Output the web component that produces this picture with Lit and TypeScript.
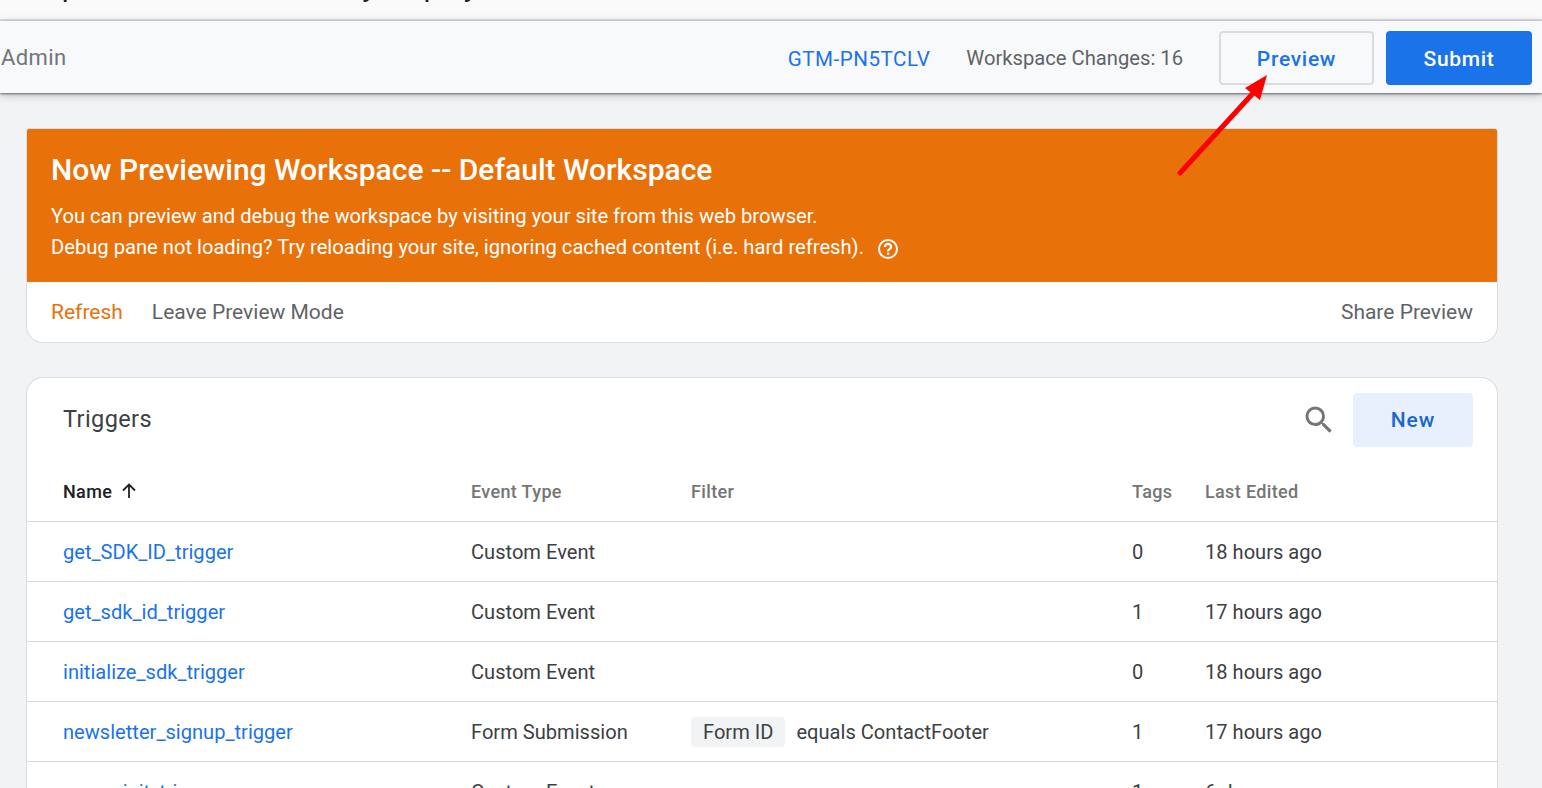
import { LitElement, html, css, svg } from 'lit';
import { customElement } from 'lit/decorators.js';

type Trigger = {
  name: string;
  type: string;
  filter?: { key: string; rule: string };
  tags: string;
  edited: string;
};

const TRIGGERS: Trigger[] = [
  { name: 'get_SDK_ID_trigger', type: 'Custom Event', tags: '0', edited: '18 hours ago' },
  { name: 'get_sdk_id_trigger', type: 'Custom Event', tags: '1', edited: '17 hours ago' },
  { name: 'initialize_sdk_trigger', type: 'Custom Event', tags: '0', edited: '18 hours ago' },
  {
    name: 'newsletter_signup_trigger',
    type: 'Form Submission',
    filter: { key: 'Form ID', rule: 'equals ContactFooter' },
    tags: '1',
    edited: '17 hours ago',
  },
  { name: 'sonar_init_trigger', type: 'Custom Event', tags: '1', edited: '6 days ago' },
];

const helpIcon = svg`<circle cx="11" cy="11" r="9" fill="none" stroke="currentColor" stroke-width="2"/>
  <path d="M7.9 8.9a3.1 3.1 0 0 1 6.2 0c0 2.2-3.1 2.3-3.1 4.3" fill="none" stroke="currentColor" stroke-width="2.2"/>
  <rect x="10" y="14.6" width="2.2" height="2.2" fill="currentColor"/>`;

@customElement('app-root')
export class AppRoot extends LitElement {
  static styles = css`
    :host {
      display: block;
      height: 788px;
      overflow: hidden;
      position: relative;
      background: #f1f3f4;
      font-family: Roboto, 'Liberation Sans', sans-serif;
      color: #3c4043;
    }
    .clipped-title {
      height: 19px;
      overflow: hidden;
      background: #fafafa;
      border-bottom: 2px solid #dcdce2;
      font-size: 30px;
      line-height: 36px;
      color: #202124;
      white-space: pre;
    }
    .clipped-title div {
      margin-top: -32px;
      padding-left: 41px;
    }
    .toolbar {
      height: 72px;
      box-sizing: border-box;
      display: flex;
      align-items: center;
      background: #f8f9fa;
      padding: 2px 10px 0 1px;
      box-shadow: 0 1px 2px rgba(60, 64, 67, 0.7), 0 2px 8px rgba(60, 64, 67, 0.3);
      position: relative;
    }
    .admin {
      flex: 1;
      font-size: 22px;
      letter-spacing: 0.4px;
      color: #70757a;
      margin-top: -2px;
    }
    .container-id {
      font-size: 20.6px;
      letter-spacing: 0.5px;
      color: #1a73e8;
      margin-right: 36px;
      margin-left: -1px;
      padding-top: 2px;
    }
    .changes {
      font-size: 20.2px;
      color: #5f6368;
      margin-right: 36px;
    }
    .btn {
      box-sizing: border-box;
      height: 54px;
      padding-top: 1px;
      border-radius: 4px;
      display: flex;
      align-items: center;
      justify-content: center;
      font-size: 21px;
      font-weight: 500;
      letter-spacing: 0.7px;
    }
    .preview {
      width: 155px;
      border: 2px solid #dadce0;
      color: #1a73e8;
      margin-right: 12px;
    }
    .submit {
      width: 146px;
      background: #1a73e8;
      color: #fff;
    }
    main {
      padding: 36px 45px 0 26px;
      display: flex;
      flex-direction: column;
      gap: 36px;
    }
    .card {
      background: #fff;
      border-radius: 16px;
      box-shadow: 0 0 0 1px #dadce0;
      box-sizing: border-box;
      margin-left: 1px;
    }
    .banner-card {
      height: 213px;
      overflow: hidden;
      border-radius: 2px 2px 16px 16px;
    }
    .banner {
      height: 153px;
      box-sizing: border-box;
      background: #e8710a;
      color: #fff;
      padding: 21px 24px 0;
    }
    .banner h1 {
      margin: 0 0 11px;
      font-size: 30px;
      line-height: 40px;
      font-weight: 500;
    }
    .banner p {
      margin: 0;
      font-size: 20.16px;
      line-height: 31px;
      display: flex;
      align-items: center;
    }
    .banner svg {
      width: 22px;
      height: 22px;
      margin-left: 13px;
      margin-top: 2px;
    }
    .actions {
      height: 60px;
      display: flex;
      align-items: center;
      padding: 0 24px;
      font-size: 21px;
      color: #5f6368;
      gap: 29px;
    }
    .refresh {
      color: #e8710a;
    }
    .share {
      margin-left: auto;
    }
    .head {
      height: 84px;
      display: flex;
      align-items: center;
      padding: 0 24px 0 36px;
    }
    .head h2 {
      flex: 1;
      margin: -2px 0 0;
      font-size: 23.5px;
      letter-spacing: 0.4px;
      font-weight: 400;
      color: #3c4043;
    }
    .head svg {
      width: 36px;
      height: 36px;
      color: #757575;
      margin-right: 16px;
    }
    .new {
      width: 120px;
      padding-top: 0;
      letter-spacing: 1px;
      background: #e8f0fe;
      color: #1967d2;
    }
    .row {
      display: grid;
      grid-template-columns: 408px 220px 441px 73px 1fr;
      align-items: center;
      height: 60px;
      box-sizing: border-box;
      padding-left: 36px;
      border-top: 1px solid #d8d8d8;
      font-size: 20.1px;
    }
    .row.header {
      height: 59px;
      border-top: 0;
      font-size: 18px;
      font-weight: 500;
      color: #757575;
      letter-spacing: 0.35px;
      padding-bottom: 1px;
    }
    .sort {
      display: flex;
      align-items: center;
      gap: 8px;
      color: #202124;
    }
    .sort svg {
      width: 18px;
      height: 18px;
    }
    .name {
      color: #1a73e8;
    }
    .filter {
      display: flex;
      align-items: center;
      gap: 11px;
    }
    .chip {
      background: #f1f3f4;
      border-radius: 4px;
      padding: 0 12px;
      line-height: 30px;
    }
    .arrow {
      position: absolute;
      left: 1170px;
      top: 70px;
      width: 110px;
      height: 110px;
    }
  `;

  renderRow(t: Trigger) {
    return html`
      <div class="row">
        <span class="name">${t.name}</span>
        <span>${t.type}</span>
        <span class="filter">
          ${t.filter
            ? html`<span class="chip">${t.filter.key}</span><span>${t.filter.rule}</span>`
            : ''}
        </span>
        <span>${t.tags}</span>
        <span>${t.edited}</span>
      </div>
    `;
  }

  render() {
    return html`
      <div class="clipped-title"><div>Open to test if it correctly display</div></div>
      <div class="toolbar">
        <span class="admin">Admin</span>
        <span class="container-id">GTM-PN5TCLV</span>
        <span class="changes">Workspace Changes: 16</span>
        <span class="btn preview">Preview</span>
        <span class="btn submit">Submit</span>
      </div>
      <main>
        <section class="card banner-card">
          <div class="banner">
            <h1>Now Previewing Workspace -- Default Workspace</h1>
            <p>You can preview and debug the workspace by visiting your site from this web browser.</p>
            <p>
              Debug pane not loading? Try reloading your site, ignoring cached content (i.e. hard refresh).
              <svg viewBox="0 0 22 22">${helpIcon}</svg>
            </p>
          </div>
          <div class="actions">
            <span class="refresh">Refresh</span>
            <span>Leave Preview Mode</span>
            <span class="share">Share Preview</span>
          </div>
        </section>
        <section class="card">
          <div class="head">
            <h2>Triggers</h2>
            <svg viewBox="0 0 24 24" fill="currentColor">
              <path d="M15.5 14h-.79l-.28-.27A6.47 6.47 0 0 0 16 9.5 6.5 6.5 0 1 0 9.5 16c1.61 0 3.09-.59 4.23-1.57l.27.28v.79l5 4.99L20.49 19l-4.99-5zm-6 0C7.01 14 5 11.99 5 9.5S7.01 5 9.5 5 14 7.01 14 9.5 11.99 14 9.5 14z"/>
            </svg>
            <span class="btn new">New</span>
          </div>
          <div class="row header">
            <span class="sort">
              Name
              <svg viewBox="0 0 18 18" fill="none" stroke="currentColor" stroke-width="1.8">
                <path d="M9 16V2.5M3 8.5l6-6 6 6"/>
              </svg>
            </span>
            <span>Event Type</span>
            <span>Filter</span>
            <span>Tags</span>
            <span>Last Edited</span>
          </div>
          ${TRIGGERS.map((t) => this.renderRow(t))}
        </section>
      </main>
      <svg class="arrow" viewBox="0 0 110 110">
        <path d="M10 103L86 20" stroke="#ff0000" stroke-width="5" stroke-linecap="round" fill="none"/>
        <path d="M97 5L75 18L90 30Z" fill="#ff0000"/>
      </svg>
    `;
  }
}
